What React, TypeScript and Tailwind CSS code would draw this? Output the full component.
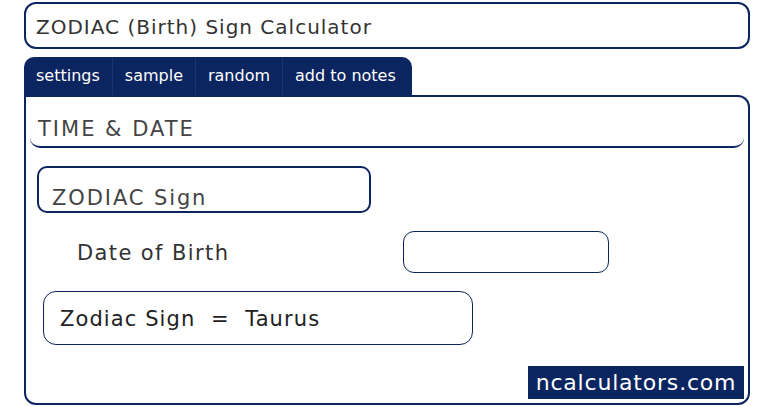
import React from 'react';

const tabs = ['settings', 'sample', 'random', 'add to notes'];

export default function App() {
  return (
    <div className="w-[770px] h-[407px] bg-white font-['DejaVu_Sans',sans-serif] text-[#444]">
      <div className="pt-[2px] pl-[24px] pr-[20px]">
        {/* Title */}
        <div className="h-[47px] flex items-center pt-[3px] px-[10px] border-2 border-[#0b2560] rounded-[12px] text-[20px] tracking-[1px] text-[#333]">
          ZODIAC (Birth) Sign Calculator
        </div>

        {/* Tabs */}
        <div className="mt-[8px] flex w-[388px] h-[38px] bg-[#0b2560] rounded-t-[10px] overflow-hidden">
          {tabs.map((t, i) => (
            <div
              key={t}
              className={`flex items-center whitespace-nowrap px-[12px] text-[16px] text-white ${i < tabs.length - 1 ? 'border-r border-[#1a3570]' : 'grow'}`}
            >
              {t}
            </div>
          ))}
        </div>

        {/* Panel */}
        <div className="h-[310px] border-2 border-[#0b2560] rounded-tr-[12px] rounded-b-[12px] flex flex-col">
          <div className="mx-[4px] h-[51px] flex items-end pb-[1px] px-[8px] border-b-2 border-[#0b2560] rounded-b-[10px] text-[21px] tracking-[2px] text-[#444]">
            TIME &amp; DATE
          </div>

          <div className="ml-[11px] mt-[18px] w-[334px] h-[47px] flex items-end px-[13px] border-2 border-[#0b2560] rounded-[10px] text-[21px] leading-[26px] tracking-[1.9px] text-[#444]">
            ZODIAC Sign
          </div>

          <div className="mt-[18px] flex items-center h-[42px]">
            <div className="ml-[51px] w-[326px] pt-[4px] text-[21px] tracking-[1.4px] text-[#333]">Date of Birth</div>
            <div className="w-[206px] h-[42px] border-[1.5px] border-[#0b2560] rounded-[11px]" />
          </div>

          <div className="ml-[17px] mt-[18px] w-[430px] h-[54px] flex items-center pt-[4px] px-[16px] border-[1.5px] border-[#0b2560] rounded-[13px] text-[21px] tracking-[1.1px] text-[#222]">
            Zodiac Sign&nbsp;&nbsp;=&nbsp;&nbsp;Taurus
          </div>

          <div className="mt-auto mb-[4px] mr-[4px] self-end w-[216px] h-[33px] bg-[#0b2560] flex items-center justify-center text-[22px] tracking-[0.8px] text-white">
            ncalculators.com
          </div>
        </div>
      </div>
    </div>
  );
}
